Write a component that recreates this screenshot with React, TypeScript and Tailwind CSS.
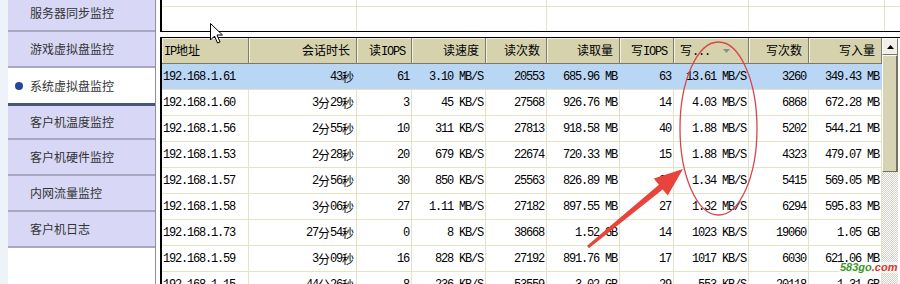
import React from "react";

const menu = [
  "服务器同步监控",
  "游戏虚拟盘监控",
  "系统虚拟盘监控",
  "客户机温度监控",
  "客户机硬件监控",
  "内网流量监控",
  "客户机日志",
];

const widths = [
  "w-[87px]",
  "w-[108px]",
  "w-[55px]",
  "w-[74px]",
  "w-[61px]",
  "w-[73px]",
  "w-[54px]",
  "w-[75px]",
  "w-[60px]",
  "w-[73px]",
];

const heads = ["IP地址", "会话时长", "读IOPS", "读速度", "读次数", "读取量", "写IOPS", "写...", "写次数", "写入量"];

const rows = [
  ["192.168.1.61", "43秒", "61", "3.10 MB/S", "20553", "685.96 MB", "63", "13.61 MB/S", "3260", "349.43 MB"],
  ["192.168.1.60", "3分29秒", "3", "45 KB/S", "27568", "926.76 MB", "14", "4.03 MB/S", "6868", "672.28 MB"],
  ["192.168.1.56", "2分55秒", "10", "311 KB/S", "27813", "918.58 MB", "40", "1.88 MB/S", "5202", "544.21 MB"],
  ["192.168.1.53", "2分28秒", "20", "679 KB/S", "22674", "720.33 MB", "15", "1.88 MB/S", "4323", "479.07 MB"],
  ["192.168.1.57", "2分56秒", "30", "850 KB/S", "25563", "826.89 MB", "24", "1.34 MB/S", "5415", "569.05 MB"],
  ["192.168.1.58", "3分06秒", "27", "1.11 MB/S", "27182", "897.55 MB", "27", "1.32 MB/S", "6294", "595.83 MB"],
  ["192.168.1.73", "27分54秒", "0", "8 KB/S", "38668", "1.52 GB", "14", "1023 KB/S", "19060", "1.05 GB"],
  ["192.168.1.59", "3分09秒", "16", "828 KB/S", "27192", "891.76 MB", "17", "1017 KB/S", "6030", "621.06 MB"],
  ["192.168.1.15", "44分26秒", "8", "236 KB/S", "53559", "3.02 GB", "29", "553 KB/S", "20118", "1.31 GB"],
];

// ascii runs go in a narrow mono face, chinese runs in the CJK face
const Mixed = ({ text }: { text: string }) => {
  const parts = text.match(/[\x20-\x7e]+|[^\x20-\x7e]+/g) ?? [];
  return (
    <>
      {parts.map((p, i) =>
        /^[\x20-\x7e]/.test(p) ? (
          <span key={i} className="font-['Liberation_Mono',monospace] tracking-[-1.2px]">
            {p}
          </span>
        ) : (
          <span key={i} className="font-['Noto_Sans_CJK_SC',sans-serif]">
            {p}
          </span>
        )
      )}
    </>
  );
};

const Sidebar = () => (
  <div className="w-[148px] shrink-0 h-full border-r border-[#8e8e9e] bg-white flex flex-col">
    <div className="-mt-[4px] flex flex-col">
      {menu.map((m, i) => {
        const active = i === 2;
        return (
          <div
            key={m}
            className={`flex items-center text-[12px] text-[#333] font-['Noto_Sans_CJK_SC',sans-serif] ${
              active
                ? "h-[38px] bg-white border-b-[3px] border-[#46577e] pl-[7px]"
                : i === 3
                ? "h-[34px] bg-[#d8d8f6] border-b-2 border-[#a7a7bf] pl-[22px]"
                : "h-[36px] bg-[#d8d8f6] border-b-2 border-[#a7a7bf] pl-[22px]"
            }`}
          >
            {active && <span className="w-[8px] h-[8px] rounded-full bg-[#24479a] mr-[7px]" />}
            {m}
          </div>
        );
      })}
    </div>
  </div>
);

const TopPanel = () => (
  <div className="h-[32px] shrink-0 border-l-2 border-b border-black flex flex-col bg-white">
    <div className="h-[7px] border-b border-[#e4e4cc] flex">
      <div className="w-[195px] border-r border-[#e4e4cc]" />
      <div className="w-[190px] border-r border-[#e4e4cc]" />
      <div className="w-[202px] border-r border-[#e4e4cc]" />
      <div className="w-[136px] border-r border-[#e4e4cc]" />
    </div>
    <div className="flex-1 flex">
      <div className="w-[195px] border-r border-[#e4e4cc]" />
      <div className="w-[190px] border-r border-[#e4e4cc]" />
      <div className="w-[202px] border-r border-[#e4e4cc]" />
      <div className="w-[136px] border-r border-[#e4e4cc]" />
    </div>
  </div>
);

const Scrollbar = () => (
  <div className="w-[16px] shrink-0 h-full flex flex-col bg-[image:repeating-conic-gradient(#d2cfc4_0%_25%,#ffffff_0%_50%)] bg-size-[2px_2px]">
    <div className="h-[17px] shrink-0 bg-[#f1f0e8] border border-t-white border-l-white border-r-[#77766a] border-b-[#77766a] flex items-center justify-center">
      <svg width="7" height="4" viewBox="0 0 7 4">
        <path d="M0 4 L3.5 0 L7 4 Z" fill="#000" />
      </svg>
    </div>
    <div className="h-[117px] shrink-0 bg-[#d7d3b5] border-l border-t border-white border-r-2 border-b border-r-[#75735f] border-b-[#75735f]" />
  </div>
);

const Table = () => (
  <div className="flex-1 flex border-l-2 border-t border-black overflow-hidden">
    <div className="w-[720px] shrink-0 flex flex-col">
      <div className="flex h-[26px] shrink-0 bg-[#d6d2ad] border-b border-[#7c7a64]">
        {heads.map((h, j) => (
          <div
            key={h}
            className={`${widths[j]} shrink-0 h-full flex items-center border-r border-[#7f7d68] shadow-[inset_1px_1px_0_#f3f1e1] text-[12px] text-black whitespace-nowrap ${
              j === 0 ? "pl-[2px]" : j === 7 ? "pl-[6px] pr-[18px] justify-between" : "justify-end pr-[6px]"
            }`}
          >
            <span>
              <Mixed text={h} />
            </span>
            {j === 7 && (
              <svg width="7" height="4" viewBox="0 0 7 4">
                <path d="M0 0 L7 0 L3.5 4 Z" fill="#8f8d80" />
              </svg>
            )}
          </div>
        ))}
      </div>
      {rows.map((r, i) => (
        <div key={r[0]} className={`flex h-[26px] shrink-0 ${i === 0 ? "bg-[#b9d6f5]" : "bg-white"}`}>
          {r.map((c, j) => (
            <div
              key={j}
              className={`${widths[j]} shrink-0 h-full flex items-center border-b border-[#e3e3c5] ${
                i === 0 ? "border-r border-r-[#b9d6f5]" : "border-r"
              } ${j === 0 ? "justify-start pl-[1px]" : "justify-end pr-[2px]"} text-[12px] text-black whitespace-nowrap overflow-hidden`}
            >
              <Mixed text={c} />
            </div>
          ))}
        </div>
      ))}
    </div>
    <Scrollbar />
    <div className="w-[1px] shrink-0 bg-white" />
  </div>
);

export default function App() {
  return (
    <div className="relative w-[900px] h-[284px] overflow-hidden bg-white flex">
      <div className="w-[8px] shrink-0 h-full bg-[#eef2f9]" />
      <Sidebar />
      <div className="w-[4px] shrink-0" />
      <div className="flex-1 flex flex-col h-full">
        <TopPanel />
        <div className="h-[5px] shrink-0" />
        <Table />
      </div>

      {/* annotations drawn on top of the screenshot */}
      <svg className="absolute left-0 top-0 pointer-events-none" width="900" height="284" viewBox="0 0 900 284">
        <ellipse cx="718.5" cy="128.5" rx="38.5" ry="86.5" fill="none" stroke="#d8464b" strokeWidth="1.3" />
        <polygon
          points="588.9,248.2 662.7,189.4 667.8,195.6 683,169 653.8,178.6 658.9,184.8 587.1,245.8"
          fill="#e8443b"
        />
        <path
          d="M210.5 23.5 L210.5 40 L214.5 36 L217.5 43 L220 42 L217 35 L222.5 35 Z"
          fill="#fff"
          stroke="#000"
          strokeWidth="1"
          strokeLinejoin="round"
        />
      </svg>
      <div className="absolute left-[839px] top-[262px] px-[1px] bg-white/60 text-[11px] font-bold italic font-['Liberation_Sans',sans-serif] leading-none pointer-events-none">
        <span className="text-[#3a962c]">583go</span>
        <span className="text-[#e0332b]">.com</span>
      </div>
    </div>
  );
}
